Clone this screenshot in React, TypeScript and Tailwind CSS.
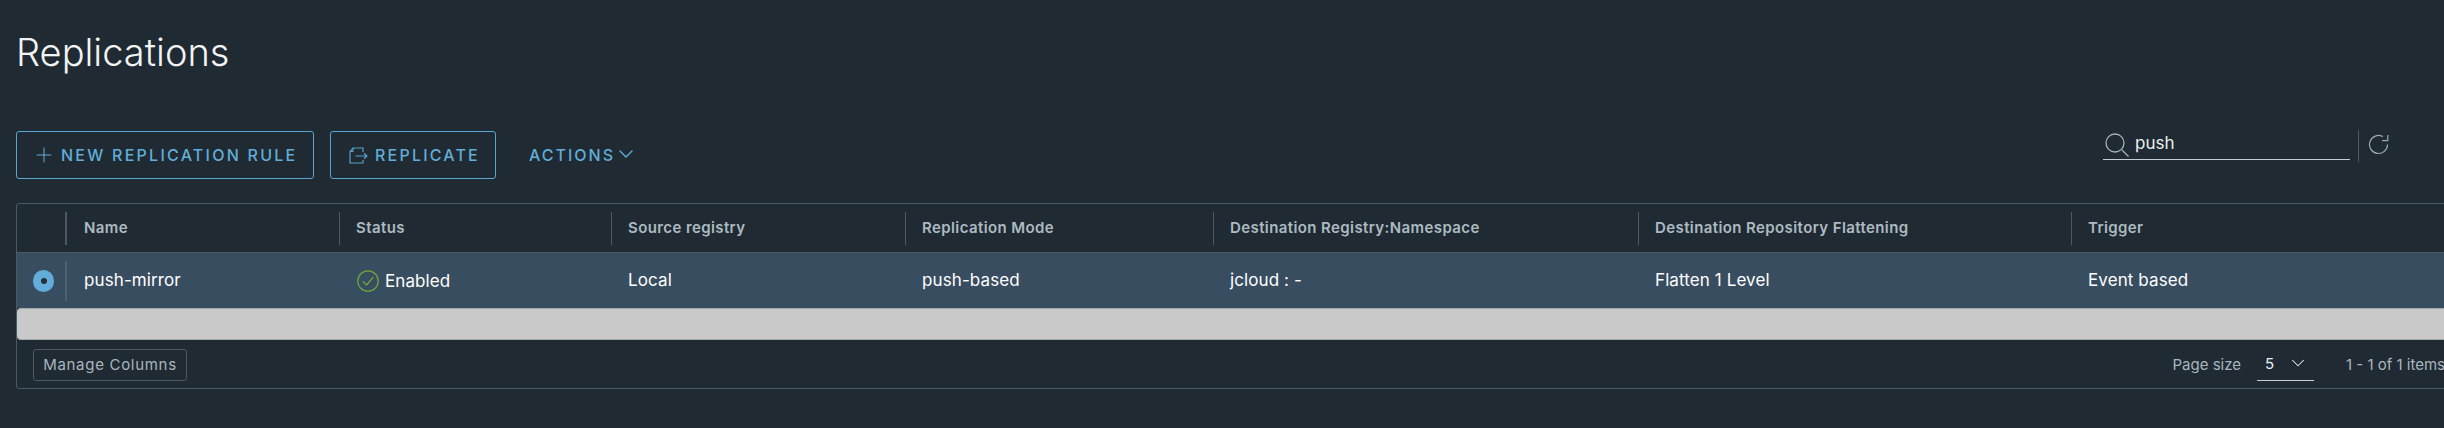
import { ChevronDown, Plus } from "lucide-react";

const FONT = "font-['Inter','Liberation_Sans',sans-serif]";

// column widths measured from the separators, last one runs off the page
const columns = [
  { label: "Name", value: "push-mirror", width: "w-[272px]" },
  { label: "Status", value: "Enabled", width: "w-[272px]" },
  { label: "Source registry", value: "Local", width: "w-[294px]" },
  { label: "Replication Mode", value: "push-based", width: "w-[308px]" },
  { label: "Destination Registry:Namespace", value: "jcloud : -", width: "w-[425px]" },
  { label: "Destination Repository Flattening", value: "Flatten 1 Level", width: "w-[433px]" },
  { label: "Trigger", value: "Event based", width: "w-[400px]" },
];

function ReplicateIcon() {
  return (
    <svg width="19" height="17" viewBox="0 0 19 17" fill="none" stroke="#5a9fc9" strokeWidth="1.2" className="mr-[7px] shrink-0">
      <path d="M14 5V1H4L1 4.5V16H14V13" />
      <path d="M4 1V4.5H1" />
      <path d="M6.5 9H18M15 6.2L18 9L15 11.8" />
    </svg>
  );
}

function SearchIcon() {
  return (
    <svg width="24" height="24" viewBox="0 0 24 24" fill="none" stroke="#a3b3bb" strokeWidth="1.3" className="shrink-0">
      <circle cx="10" cy="10" r="9" />
      <path d="M17 17L23.5 23.5" />
    </svg>
  );
}

function RefreshIcon() {
  return (
    <svg width="21" height="21" viewBox="0 0 21 21" fill="none" stroke="#9aabb4" strokeWidth="1.2" className="-mt-[2px]">
      <path d="M19.5 10.5A9 9 0 1 1 14.8 2.6" />
      <path d="M19.8 1V6.6H14.2" />
    </svg>
  );
}

function StatusIcon() {
  return (
    <svg width="22" height="22" viewBox="0 0 22 22" fill="none" stroke="#6ca83a" strokeWidth="1.2" className="shrink-0">
      <circle cx="11" cy="11" r="10.2" />
      <path d="M5.8 11.2L9.6 15L16.4 7" />
    </svg>
  );
}

export default function App() {
  return (
    <div className={`w-[2444px] h-[428px] overflow-hidden bg-[#1f2a33] ${FONT}`}>
      <h1 className="ml-4 pt-[27px] h-[131px] text-[38px] leading-[50px] font-light text-[#f2f4f5]">
        Replications
      </h1>

      {/* Toolbar */}
      <div className="flex h-[48px] pl-4 pr-[55px] items-center justify-between">
        <div className="flex items-center">
          <button className="flex h-[48px] w-[298px] items-center rounded-[3px] border border-[#5aa5d6] pl-[15px] text-[16px] font-medium tracking-[2.25px] text-[#62add9]">
            <Plus size={24} strokeWidth={1} className="mr-[5px] shrink-0" />
            NEW REPLICATION RULE
          </button>
          <button className="ml-[16px] flex h-[48px] w-[166px] items-center rounded-[3px] border border-[#5aa5d6] pl-[18px] text-[16px] font-medium tracking-[2.2px] text-[#62add9]">
            <ReplicateIcon />
            REPLICATE
          </button>
          <button className="ml-[33px] flex items-center text-[16px] font-medium tracking-[2px] text-[#62add9]">
            ACTIONS
            <ChevronDown size={24} strokeWidth={1.4} className="-mt-[3px] -ml-[1px]" />
          </button>
        </div>

        <div className="flex h-[29px] items-center self-start">
          <div className="flex h-[29px] w-[247px] items-center gap-[6px] border-b border-[#c3cfd5] pl-[2px]">
            <SearchIcon />
            <span className="text-[17px] leading-none text-[#e9eef0] -mt-[3px]">push</span>
          </div>
          <div className="ml-2 mr-[9px] h-[32px] w-px bg-[#485a66]" />
          <RefreshIcon />
        </div>
      </div>

      {/* Grid */}
      <div className="mt-[24px] ml-4 w-[2480px] h-[186px] rounded-[3px] border border-[#485a66]">
        <div className="flex h-[49px] border-b border-[#485a66]">
          <div className="flex w-[50px] shrink-0 items-center justify-end">
            <span className="h-[33px] w-[2px] bg-[#485a66]" />
          </div>
          {columns.map((c, i) => (
            <div key={c.label} className={`flex shrink-0 items-center ${c.width}`}>
              {i > 0 && <span className="h-[33px] w-px bg-[#485a66]" />}
              <span className={`text-[15px] font-semibold tracking-[0.4px] text-[#adbac1] ${i > 0 ? "ml-[16px]" : "ml-[17px]"}`}>
                {c.label}
              </span>
            </div>
          ))}
        </div>

        <div className="flex h-[55px] bg-[#394d61]">
          <div className="flex w-[50px] shrink-0 items-center justify-end">
            <span className="flex h-[22px] w-[21px] mr-[11px] mt-[1px] items-center justify-center rounded-full bg-[#62add9]">
              <span className="h-[6px] w-[6px] rounded-full bg-[#23303a]" />
            </span>
            <span className="h-[40px] w-[2px] bg-[#4d6074]" />
          </div>
          {columns.map((c) => (
            <div key={c.label} className={`flex shrink-0 items-center text-[17px] tracking-[0.1px] text-white ${c.width}`}>
              {c.label === "Status" ? (
                <span className="ml-[18px] flex items-center gap-[6px]">
                  <StatusIcon />
                  <span className="mt-[2px]">{c.value}</span>
                </span>
              ) : (
                <span className="ml-[17px]">{c.value}</span>
              )}
            </div>
          ))}
        </div>

        {/* Horizontal scrollbar */}
        <div className="h-[32px] rounded-l-[4px] border-y border-[#a2a7a9] bg-[#c9c9c9]" />

        <div className="flex h-[48px] items-center justify-between pt-[2px] pl-4 pr-[55px]">
          <button className="h-[32px] w-[154px] rounded-[3px] border border-[#485a66] text-[15px] tracking-[0.7px] text-[#a9b6bd]">
            Manage Columns
          </button>
          <div className="flex items-center text-[15px] text-[#a9b6bd]">
            <span>Page size</span>
            <div className="ml-4 flex h-[31px] w-[57px] items-center justify-between border-b border-[#c3cfd5] pl-2 pr-[5px] text-[#e9eef0]">
              <span>5</span>
              <ChevronDown size={22} strokeWidth={1.1} className="-mt-[4px]" />
            </div>
            <span className="ml-8 w-[94px] whitespace-nowrap">1 - 1 of 1 items</span>
          </div>
        </div>
      </div>
    </div>
  );
}
